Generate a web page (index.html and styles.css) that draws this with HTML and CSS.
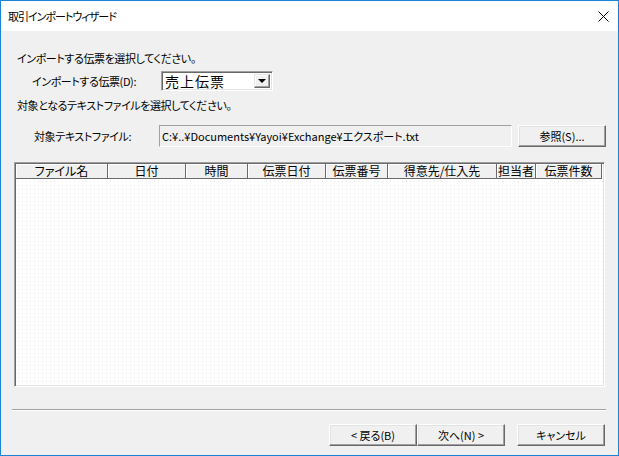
FILE: index.html
```html
<!DOCTYPE html>
<html lang="ja">
<head>
<meta charset="utf-8">
<title>取引インポートウィザード</title>
<link rel="stylesheet" href="styles.css">
</head>
<body>
<div class="window">
  <div class="titlebar">
    <span class="title">取引インポートウィザード</span>
    <svg class="close" width="11" height="11" viewBox="0 0 11 11"><path d="M0.5 0.5 L10.5 10.5 M10.5 0.5 L0.5 10.5" stroke="#000" stroke-width="1" fill="none"/></svg>
  </div>
  <div class="content">
    <div class="line line1">インポートする伝票を選択してください。</div>
    <div class="row row-combo">
      <span class="label label-d">インポートする伝票(D):</span>
      <div class="combo">
        <span class="combo-text">売上伝票</span>
        <span class="combo-btn"><span class="tri"></span></span>
      </div>
    </div>
    <div class="line line2">対象となるテキストファイルを選択してください。</div>
    <div class="row row-path">
      <span class="label label-f">対象テキストファイル:</span>
      <div class="pathbox">C:¥..¥Documents¥Yayoi¥Exchange¥エクスポート.txt</div>
      <button class="btn btn-browse">参照(S)...</button>
    </div>
    <div class="list">
      <div class="header">
        <div class="hcell" style="width:92px">ファイル名</div>
        <div class="hcell" style="width:78px">日付</div>
        <div class="hcell" style="width:62px">時間</div>
        <div class="hcell" style="width:78px">伝票日付</div>
        <div class="hcell" style="width:62px">伝票番号</div>
        <div class="hcell" style="width:109px">得意先/仕入先</div>
        <div class="hcell" style="width:39px">担当者</div>
        <div class="hcell" style="width:66px">伝票件数</div>
      </div>
      <div class="list-body"></div>
    </div>
    <div class="separator"></div>
    <div class="buttons">
      <button class="btn btn-nav">&lt; 戻る(B)</button>
      <button class="btn btn-nav">次へ(N) &gt;</button>
      <button class="btn btn-nav btn-cancel">キャンセル</button>
    </div>
  </div>
</div>
</body>
</html>
```
FILE: styles.css
```css
* { box-sizing: border-box; }
html, body {
  margin: 0;
  padding: 0;
  width: 619px;
  height: 456px;
  overflow: hidden;
}
body {
  font-family: "Noto Sans CJK JP", "Liberation Sans", sans-serif;
  font-size: 11px;
  font-feature-settings: "palt";
  color: #000;
}
.window {
  width: 619px;
  height: 456px;
  border: 1px solid #1883d7;
  display: flex;
  flex-direction: column;
  background: #f0f0f0;
}
.titlebar {
  height: 30px;
  background: #fff;
  display: flex;
  align-items: center;
  justify-content: space-between;
  padding: 0 9px 0 7px;
}
.title {
  font-size: 11px;
  letter-spacing: -1px;
  line-height: 14px;
}
.close { display: block; }
.content {
  flex: 1;
  display: flex;
  flex-direction: column;
  padding: 0 12px 0 12px;
}
.line {
  height: 14px;
  line-height: 14px;
  padding-left: 4px;
  white-space: nowrap;
  letter-spacing: -0.4px;
}
.line1 { margin-top: 20px; }
.line2 { margin-top: 7px; }
.row {
  display: flex;
  align-items: center;
}
.label {
  white-space: nowrap;
  line-height: 14px;
  letter-spacing: -0.4px;
}
.row-combo {
  margin-top: 6px;
  height: 20px;
}
.label-d { margin-left: 19px; width: 129px; }
.combo {
  width: 112px;
  height: 20px;
  background: #fff;
  border: 1px solid;
  border-color: #a0a0a0 #fff #fff #a0a0a0;
  box-shadow: inset 1px 1px #696969, inset -1px -1px #e3e3e3;
  display: flex;
  align-items: center;
  justify-content: space-between;
  padding: 2px 2px 2px 3px;
}
.combo-text {
  font-size: 14px;
  line-height: 16px;
  letter-spacing: 1px;
}
.combo-btn {
  width: 16px;
  height: 14px;
  background: #f0f0f0;
  border: 1px solid;
  border-color: #e3e3e3 #696969 #696969 #e3e3e3;
  box-shadow: inset -1px -1px #a0a0a0, inset 1px 1px #fff;
  display: flex;
  align-items: center;
  justify-content: center;
}
.tri {
  width: 0;
  height: 0;
  border-left: 4px solid transparent;
  border-right: 4px solid transparent;
  border-top: 4px solid #000;
  margin-left: -1px;
}
.row-path {
  margin-top: 13px;
  height: 22px;
}
.label-f { margin-left: 21px; width: 125px; }
.pathbox {
  width: 353px;
  height: 22px;
  border: 1px solid;
  border-color: #a0a0a0 #fff #fff #a0a0a0;
  background: #f0f0f0;
  line-height: 20px;
  padding-left: 2px;
  white-space: nowrap;
  overflow: hidden;
  font-size: 11px;
}
.btn {
  font-family: inherit;
  font-size: 11px;
  font-feature-settings: "palt";
  color: #000;
  background: #f0f0f0;
  border: 1px solid;
  border-color: #fff #696969 #696969 #fff;
  box-shadow: inset -1px -1px #a0a0a0, inset 1px 1px #e3e3e3;
  height: 22px;
  padding: 0;
  margin: 0;
  line-height: 18px;
  border-radius: 0;
}
.btn-browse {
  width: 88px;
  margin-left: 6px;
}
.list {
  margin-top: 15px;
  height: 225px;
  width: 591px;
  margin-left: 1px;
  border: 1px solid;
  border-color: #a0a0a0 #fff #fff #a0a0a0;
  box-shadow: inset 1px 1px #696969, inset -1px -1px #e3e3e3;
  padding: 1px;
  display: flex;
  flex-direction: column;
  background: #fff;
}
.header {
  display: flex;
  height: 15px;
  flex: none;
}
.hcell {
  height: 15px;
  background: #f0f0f0;
  border-right: 1px solid #696969;
  border-bottom: 1px solid #696969;
  box-shadow: inset 1px 1px #fff;
  text-align: center;
  font-size: 12px;
  line-height: 14px;
  white-space: nowrap;
  flex: none;
}
.list-body {
  flex: 1;
  background-color: #fff;
  background-image: conic-gradient(from 90deg at 1px 1px, #fff 0deg 180deg, #e8e8e8 180deg 270deg, #fff 270deg);
  background-size: 4px 4px;
  background-position: 2px 2px;
}
.separator {
  margin-top: 22px;
  height: 2px;
  border-top: 1px solid #a0a0a0;
  border-bottom: 1px solid #fff;
  width: 594px;
  margin-left: -1px;
}
.buttons {
  margin-top: 13px;
  display: flex;
  justify-content: flex-end;
  padding-right: 1px;
}
.btn-nav { width: 88px; }
.btn-cancel { margin-left: 12px; }
```
